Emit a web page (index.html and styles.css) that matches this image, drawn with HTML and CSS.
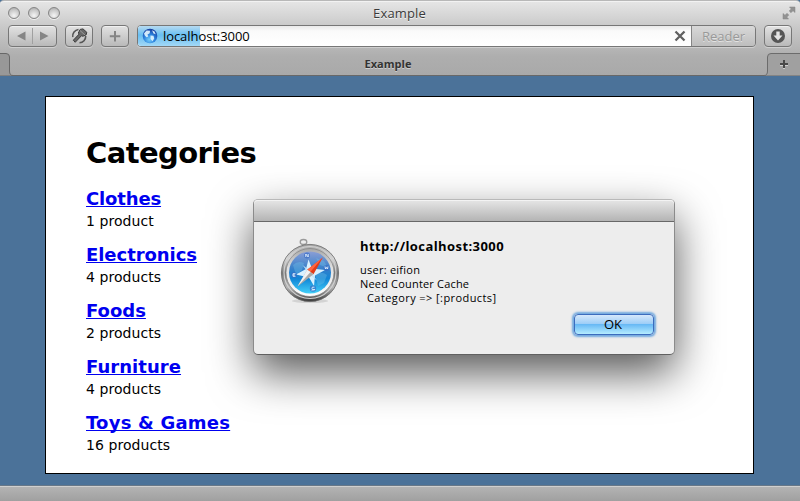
FILE: index.html
```html
<!DOCTYPE html>
<html lang="en">
<head>
<meta charset="utf-8">
<title>Example</title>
<link rel="stylesheet" href="styles.css">
</head>
<body>
<div class="window">
  <header class="chrome">
    <div class="titlebar">
      <div class="lights"><i></i><i></i><i></i></div>
      <span class="window-title">Example</span>
      <svg class="fullscreen" width="16" height="16" viewBox="0 0 16 16"><path d="M8.500 2H14V7.500L12 5.700 10 7.700 8.200 5.900 10.200 3.900ZM7.500 14H2V8.500L4 10.300 6 8.300 7.800 10.100 5.800 12.100Z" fill="#929292" stroke="#858585" stroke-width=".5"/></svg>
    </div>
    <div class="toolbar">
      <div class="btn nav">
        <svg width="47" height="20" viewBox="0 0 47 20"><path d="M16.500 5.500V14.500L8 10Z M31 5.500V14.500L39.500 10Z" fill="#858585"/><path d="M23.500 2V18" stroke="#a0a0a0"/></svg>
      </div>
      <div class="btn tool">
        <svg width="26" height="20" viewBox="0 0 26 20"><path d="M6.800 11A6.500 6.500 0 0 1 12.500 3.500M13.500 16.800A6.500 6.500 0 0 0 19.700 10" fill="none" stroke="#555" stroke-width="1.600"/><path d="M12.300 7L14.200 3.400 17 2.900 20.800 6.300 20.200 8.800 16.800 10.300 15.500 9.700 9.200 16.300 7.300 14.200 13.200 8Z" fill="#686868" stroke="#3c3c3c"/><path d="M14 4.500L19 9" stroke="#999"/></svg>
      </div>
      <div class="btn plus">
        <svg width="26" height="20" viewBox="0 0 26 20"><path d="M13 5V15.500M7.800 10.200H18.300" stroke="#858585" stroke-width="2"/></svg>
      </div>
      <div class="address">
        <div class="field">
          <svg class="globe" width="16" height="16" viewBox="0 0 16 16"><defs><radialGradient id="gl" cx=".45" cy=".75" r=".75"><stop offset="0" stop-color="#74cdfa"/><stop offset=".5" stop-color="#2c82dd"/><stop offset="1" stop-color="#17399b"/></radialGradient></defs><circle cx="8" cy="8" r="7.300" fill="url(#gl)"/><path d="M2 5.500L4.500 2.500 8 2.700 7.700 5.300 5.500 6.500 6.200 8.500 4.500 9.200 2.800 7.500ZM8.500 7.500L11.500 7.800 12.200 10.500 10.500 13.200 8.500 11ZM10 2.200L12.500 3.500 13.700 6.300 11.500 5.500Z" fill="#e4f6ff" opacity=".9"/></svg>
          <span class="url">localhost:3000</span>
          <svg class="stop" width="12" height="12" viewBox="0 0 12 12"><path d="M1.500 1.500L10.500 10.500M10.500 1.500L1.500 10.500" stroke="#606060" stroke-width="2.300"/></svg>
        </div>
        <div class="reader"><span>Reader</span></div>
      </div>
      <div class="btn dl">
        <svg width="26" height="20" viewBox="0 0 26 20"><circle cx="13" cy="10" r="7" fill="#555"/><path d="M11.300 5.500H14.700V9.500H17.500L13 14.600 8.500 9.500H11.300Z" fill="#e5e5e5"/></svg>
      </div>
    </div>
    <div class="tabs">
      <svg width="14" height="23" viewBox="0 0 14 23"><path d="M0 .5H6Q9.500.5 9.500 4V18Q9.500 22.500 13 22.500H0Z" fill="#989898"/><path d="M0 .5H6Q9.500.5 9.500 4V18Q9.500 22.500 13 22.500" fill="none" stroke="#686868"/></svg>
      <span class="tab-title">Example</span>
      <svg width="38" height="23" viewBox="0 0 38 23"><path d="M38 .5H9Q5.500.5 5.500 4V18Q5.500 22.500 2 22.500H38Z" fill="#a0a0a0"/><path d="M38 .5H9Q5.500.5 5.500 4V18Q5.500 22.500 2 22.500" fill="none" stroke="#6c6c6c"/><path d="M22 8V16M18 12H26" stroke="#d0d0d0" stroke-width="2"/><path d="M22 7V15M18 11H26" stroke="#484848" stroke-width="2"/></svg>
    </div>
  </header>
  <main class="viewport">
    <section class="page">
      <h1><span>Categories</span></h1>
      <article><h2><a class="w1" href="#">Clothes</a></h2><p>1 product</p></article>
      <article><h2><a class="w2" href="#">Electronics</a></h2><p>4 products</p></article>
      <article><h2><a class="w3" href="#">Foods</a></h2><p>2 products</p></article>
      <article><h2><a class="w4" href="#">Furniture</a></h2><p>4 products</p></article>
      <article><h2><a class="w5" href="#">Toys &amp; Games</a></h2><p>16 products</p></article>
    </section>
  </main>
  <footer class="status"></footer>
</div>

<div class="dialog" role="alertdialog">
  <div class="dialog-bar"></div>
  <div class="dialog-body">
    <svg class="compass" width="64" height="70" viewBox="0 0 64 70">
      <defs>
        <linearGradient id="rim" x1="0" y1="0" x2="0" y2="1"><stop offset="0" stop-color="#a5a5a5"/><stop offset=".25" stop-color="#d8d8d8"/><stop offset=".5" stop-color="#777"/><stop offset=".75" stop-color="#b5b5b5"/><stop offset="1" stop-color="#383838"/></linearGradient>
        <linearGradient id="rim2" x1="0" y1="0" x2="0" y2="1"><stop offset="0" stop-color="#a8a8a8"/><stop offset=".4" stop-color="#e0e0e0"/><stop offset="1" stop-color="#fff"/></linearGradient>
        <linearGradient id="face" x1="0" y1="0" x2="0" y2="1"><stop offset="0" stop-color="#8b9ed5"/><stop offset=".42" stop-color="#347fca"/><stop offset=".65" stop-color="#1186d6"/><stop offset="1" stop-color="#43d0fa"/></linearGradient>
      </defs>
      <ellipse cx="24.500" cy="6" rx="3.300" ry="2.500" fill="none" stroke="#9a9a9a" stroke-width="1.300"/>
      <ellipse cx="31" cy="65" rx="18" ry="2" fill="#999" opacity=".3"/>
      <circle cx="31" cy="37" r="28.600" fill="url(#rim)" stroke="#686868" stroke-width=".8"/>
      <circle cx="31" cy="36.500" r="26" fill="none" stroke="#d0d0d0" stroke-width="1.200"/>
      <circle cx="31" cy="36.500" r="24" fill="url(#rim2)" stroke="#777" stroke-width=".6"/>
      <circle cx="31" cy="36.500" r="21" fill="url(#face)"/>
      <path d="M14 29Q19 24 25 27L23 34 17 39ZM36 38Q43 35 48 39L45 47 39 50ZM37 22L45 25 49 32 41 29Z" fill="#75c6ec" opacity=".35"/>
      <path d="M29.500 23.500L33 32.500 46 34 36 39.500 35 50 30 41.500 17 38.500 27 33Z" fill="#d9f1ff"/>
      <path d="M23.500 29L30 34 38 44.500 31 39Z" fill="#c5e5fa"/>
      <g fill="#386bc4" opacity=".65"><circle cx="28" cy="19.500" r="3"/><circle cx="47.500" cy="32" r="3"/><circle cx="15" cy="39" r="3"/><circle cx="34" cy="52.500" r="3.200"/></g>
      <path d="M26.800 21V18L29.200 21V18M46 30.500L46.500 33 47.500 31.500 48.500 33 49 30.500M16.500 37.700H14V40.300H16.500M14 39H16M35.500 51.200Q32.500 50.500 33 52.500T35.500 53.700 32.500 54.200" fill="none" stroke="#e5f3ff" stroke-width=".9"/>
      <path d="M43.800 21.500L34.500 38.300 28.200 33.700Z" fill="#e33b18"/>
      <path d="M43.800 21.500L31.300 36 28.200 33.700Z" fill="#ff6540"/>
      <path d="M18.500 50.500L28.200 33.700 34.500 38.300Z" fill="#aaa"/>
      <path d="M18.500 50.500L28.200 33.700 31.500 36Z" fill="#f3f3f3"/>
    </svg>
    <div class="message">
      <strong><span>http://localhost:3000</span></strong>
      <div class="l1">user: eifion</div>
      <div class="l2">Need Counter Cache</div>
      <div class="l3">Category =&gt; [:products]</div>
      <button class="ok" type="button">OK</button>
    </div>
  </div>
</div>
</body>
</html>
```
FILE: styles.css
```css
* { box-sizing: border-box; }
body { margin: 0; background: #4b7299; color: #000; font-family: "Open Sans", "Noto Sans", sans-serif; overflow: hidden; }
svg { display: block; flex: none; }
h1, h2, p { margin: 0; }
.window { height: 501px; display: flex; flex-direction: column; }
.chrome { height: 76px; flex: none; background: linear-gradient(#e6e6e6, #c9c9c9 35%, #aeaeae 75%, #a9a9a9); border-top: 1px solid #b8b8b8; border-bottom: 1px solid #686868; border-radius: 4px 4px 0 0; box-shadow: inset 0 1px #f2f2f2; }
.titlebar { height: 24px; display: grid; grid-template-columns: 1fr auto 1fr; align-items: center; padding: 0 3px 0 8px; }
.lights { display: flex; gap: 8px; margin-top: -1px; }
.lights i { width: 12px; height: 12px; border-radius: 50%; border: 1px solid #858585; background: radial-gradient(circle at 50% 75%, #f5f5f5, #c9c9c9 60%, #a5a5a5); box-shadow: 0 1px #eee; }
.window-title { font-size: 13px; line-height: 20px; color: #3a3a3a; letter-spacing: .15px; text-shadow: 0 1px #f5f5f5; margin: -1px 6px 0 0; }
.fullscreen { justify-self: end; margin-top: -1px; }
.toolbar { height: 28px; display: flex; padding: 0 8px; }
.btn { height: 22px; flex: none; border: 1px solid #777; border-radius: 4px; background: linear-gradient(#e2e2e2, #b9b9b9); box-shadow: 0 1px #cfcfcf, inset 0 1px #f0f0f0; display: flex; }
.nav { width: 49px; margin-right: 8px; }
.tool { width: 28px; margin-right: 8px; }
.plus { width: 28px; margin-right: 8px; }
.dl { width: 28px; margin-left: 8px; }
.address { flex: 1; height: 22px; display: flex; border: 1px solid #777; border-radius: 4px; overflow: hidden; box-shadow: 0 1px #cfcfcf; }
.field { flex: 1; display: flex; align-items: center; padding: 0 5px 0 4px; background: linear-gradient(#b6daf1, #66bef2 45%, #a3d8f6) 0 0 / 62px 100% no-repeat, linear-gradient(#eaeaea, #fafafa 25%, #fff); }
.url { flex: 1; padding-left: 5px; font-size: 13px; line-height: 20px; letter-spacing: -.07px; }
.reader { width: 64px; border-left: 1px solid #858585; background: linear-gradient(#d8d8d8, #bebebe); color: #999; font-size: 13px; line-height: 20px; text-align: center; text-shadow: 0 1px #e3e3e3; letter-spacing: 0; }
.tabs { height: 23px; display: flex; justify-content: space-between; border-top: 0; }
.tab-title { font-size: 11px; font-weight: 700; line-height: 22px; color: #333; text-shadow: 0 1px #cfcfcf; }
.viewport { flex: 1; padding: 20px 46px 12px 45px; }
.page { height: 378px; border: 1px solid #000; background: #fff; padding: 35px 40px 0; font-family: Verdana, "DejaVu Sans", sans-serif; }
h1 { font-size: 29px; line-height: 42px; height: 55px; letter-spacing: -.6px; }
article { height: 56px; }
h2 { font-size: 18px; line-height: 24px; height: 24px; }
h2 a { color: #0000f0; text-decoration: underline; text-decoration-thickness: 1px; text-underline-offset: 1px; text-decoration-skip-ink: none; }
.w1 { letter-spacing: -.15px; }
.w2 { letter-spacing: -.05px; }
.w4 { letter-spacing: .05px; }
.w5 { letter-spacing: .22px; }
article p { font-size: 14px; line-height: 20px; letter-spacing: .07px; }
.status { height: 15px; flex: none; background: linear-gradient(#b3b3b3, #a0a0a0); border-top: 1px solid #d0d0d0; box-shadow: 0 -1px #687888; }
.dialog { position: absolute; left: 253px; top: 199px; width: 422px; height: 156px; background: #ededed; border: 1px solid #8b8b8b; border-top-color: #b9b9b9; border-bottom-color: #606060; border-radius: 5px; box-shadow: 0 18px 44px rgba(0,0,0,.66); }
.dialog-bar { height: 22px; border-bottom: 1px solid #686868; border-radius: 4px 4px 0 0; background: linear-gradient(#e6e6e6, #b4b4b4); box-shadow: inset 0 1px #f3f3f3; }
.dialog-body { display: flex; padding: 14px 18px 0 25px; }
.message { flex: 1; padding-left: 17px; display: flex; flex-direction: column; font-size: 11px; line-height: 14px; }
.message strong { font-size: 13px; line-height: 20px; margin-bottom: 7px; letter-spacing: .42px; }
.l1 { letter-spacing: .25px; }
.l2 { letter-spacing: .18px; }
.l3 { padding-left: 7px; letter-spacing: .42px; }
.ok { align-self: flex-end; width: 80px; height: 21px; margin: 9px 2px 0 0; padding: 0 2px 0 0; border: 1px solid #3c6cbd; border-radius: 4px; background: linear-gradient(#d6e8fb, #9accf7 49%, #68b9f5 50%, #b5ecff); box-shadow: 0 0 2px 2px #72a9df; font: 13px/17px "Open Sans", sans-serif; color: #000; }
```
